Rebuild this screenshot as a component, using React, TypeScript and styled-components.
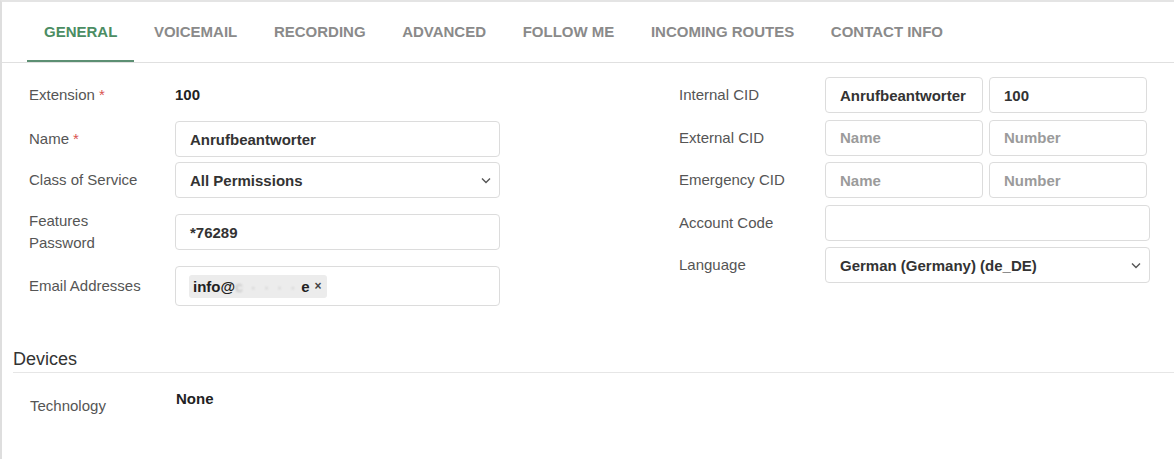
import styled, { createGlobalStyle } from 'styled-components'

const GlobalStyle = createGlobalStyle`
   html, body {
      margin: 0;
      padding: 0;
      background: #fff;
   }
   body {
      font-family: "Liberation Sans", Arial, sans-serif;
      color: #333;
   }
   * {
      box-sizing: border-box;
   }
`

const Panel = styled.div`
   height: 459px;
   border-left: 2px solid #dedede;
   border-top: 2px solid #e4e4e4;
   background: #fff;
   overflow: hidden;
`

const TabBar = styled.div`
   display: flex;
   gap: 2.6px;
   padding-left: 25px;
   border-bottom: 1px solid #e0e0e0;
`

const Tab = styled.div<{ $active?: boolean }>`
   height: 60px;
   display: flex;
   align-items: center;
   padding: 0 17px;
   font-size: 15px;
   font-weight: bold;
   color: ${(p) => (p.$active ? '#4b8d63' : '#8a8a8a')};
   border-bottom: 2px solid ${(p) => (p.$active ? '#5c8f73' : 'transparent')};
   white-space: nowrap;
`

const Body = styled.div`
   padding: 14px 0 0 27px;
`

const FormGrid = styled.div`
   display: grid;
   grid-template-columns: 471px 471px;
   column-gap: 179px;
   align-items: start;
`

const Column = styled.div<{ $gap: number }>`
   display: flex;
   flex-direction: column;
   gap: ${(p) => p.$gap}px;
`

const Row = styled.div<{ $top?: boolean }>`
   display: flex;
   align-items: ${(p) => (p.$top ? 'flex-start' : 'center')};
`

const StaticRow = styled(Row)`
   margin-bottom: 3px;
`

const Label = styled.div`
   width: 146px;
   flex: none;
   padding: 7px 0;
   font-size: 15px;
   line-height: 22px;
   color: #555;
`

const Required = styled.span`
   color: #d9534f;
   margin-left: 4px;
`

const StaticValue = styled.div`
   font-size: 15px;
   font-weight: bold;
   line-height: 22px;
   color: #222;
`

const Field = styled.div`
   flex: 1;
   min-width: 0;
`

const Pair = styled.div`
   display: grid;
   grid-template-columns: 158px 158px;
   gap: 6px;
`

const Input = styled.div<{ $placeholder?: boolean; $tall?: boolean }>`
   height: ${(p) => (p.$tall ? 40 : 36)}px;
   display: flex;
   align-items: center;
   padding: 0 14px;
   border: 1px solid #dcdcdc;
   border-radius: 4px;
   background: #fff;
   font-size: 15px;
   font-weight: bold;
   color: ${(p) => (p.$placeholder ? '#9b9b9b' : '#333')};
   white-space: nowrap;
   overflow: hidden;
`

const Select = styled(Input)`
   justify-content: space-between;
   padding-right: 8px;
`

const Chip = styled.span`
   display: inline-flex;
   align-items: center;
   height: 23px;
   margin-left: -1px;
   padding: 0 6px 0 4px;
   border-radius: 3px;
   background: #ececec;
   color: #222;
`

const Redacted = styled.span`
   display: inline-block;
   width: 66px;
   color: #bbb;
   filter: blur(1.2px);
   font-weight: normal;
   letter-spacing: 2px;
`

const ChipClose = styled.span`
   margin-left: 5px;
   font-size: 12px;
   color: #444;
`

const Section = styled.div`
   margin: 42px 0 0 -16px;
`

const SectionTitle = styled.div`
   font-size: 18px;
   line-height: 22px;
   color: #333;
   padding: 0 0 2px 0;
   border-bottom: 1px solid #e6e6e6;
`

const DeviceRow = styled(Row)`
   margin: 15px 0 0 17px;
`

const Chevron = () => (
   <svg width="10" height="7" viewBox="0 0 10 7" fill="none">
      <path d="M1 1.5 L5 5.5 L9 1.5" stroke="#555" strokeWidth="1.4" />
   </svg>
)

const tabs = ['General', 'Voicemail', 'Recording', 'Advanced', 'Follow Me', 'Incoming Routes', 'Contact Info']

export default function App() {
   return (
      <>
         <GlobalStyle />
         <Panel>
            <TabBar>
               {tabs.map((tab, index) => (
                  <Tab key={tab} $active={index === 0}>
                     {tab.toUpperCase()}
                  </Tab>
               ))}
            </TabBar>

            <Body>
               <FormGrid>
                  <Column $gap={5}>
                     <StaticRow>
                        <Label>
                           Extension<Required>*</Required>
                        </Label>
                        <StaticValue>100</StaticValue>
                     </StaticRow>
                     <Row>
                        <Label>
                           Name<Required>*</Required>
                        </Label>
                        <Field>
                           <Input>Anrufbeantworter</Input>
                        </Field>
                     </Row>
                     <Row>
                        <Label>Class of Service</Label>
                        <Field>
                           <Select>
                              All Permissions
                              <Chevron />
                           </Select>
                        </Field>
                     </Row>
                     <Row>
                        <Label>
                           Features
                           <br />
                           Password
                        </Label>
                        <Field>
                           <Input>*76289</Input>
                        </Field>
                     </Row>
                     <Row>
                        <Label>Email Addresses</Label>
                        <Field>
                           <Input $tall>
                              <Chip>
                                 info@<Redacted>c ·  · · ·</Redacted>e<ChipClose>×</ChipClose>
                              </Chip>
                           </Input>
                        </Field>
                     </Row>
                  </Column>

                  <Column $gap={6.5}>
                     <Row>
                        <Label>Internal CID</Label>
                        <Field>
                           <Pair>
                              <Input>Anrufbeantworter</Input>
                              <Input>100</Input>
                           </Pair>
                        </Field>
                     </Row>
                     <Row>
                        <Label>External CID</Label>
                        <Field>
                           <Pair>
                              <Input $placeholder>Name</Input>
                              <Input $placeholder>Number</Input>
                           </Pair>
                        </Field>
                     </Row>
                     <Row>
                        <Label>Emergency CID</Label>
                        <Field>
                           <Pair>
                              <Input $placeholder>Name</Input>
                              <Input $placeholder>Number</Input>
                           </Pair>
                        </Field>
                     </Row>
                     <Row>
                        <Label>Account Code</Label>
                        <Field>
                           <Input />
                        </Field>
                     </Row>
                     <Row>
                        <Label>Language</Label>
                        <Field>
                           <Select>
                              German (Germany) (de_DE)
                              <Chevron />
                           </Select>
                        </Field>
                     </Row>
                  </Column>
               </FormGrid>

               <Section>
                  <SectionTitle>Devices</SectionTitle>
                  <DeviceRow $top>
                     <Label>Technology</Label>
                     <StaticValue>None</StaticValue>
                  </DeviceRow>
               </Section>
            </Body>
         </Panel>
      </>
   )
}
